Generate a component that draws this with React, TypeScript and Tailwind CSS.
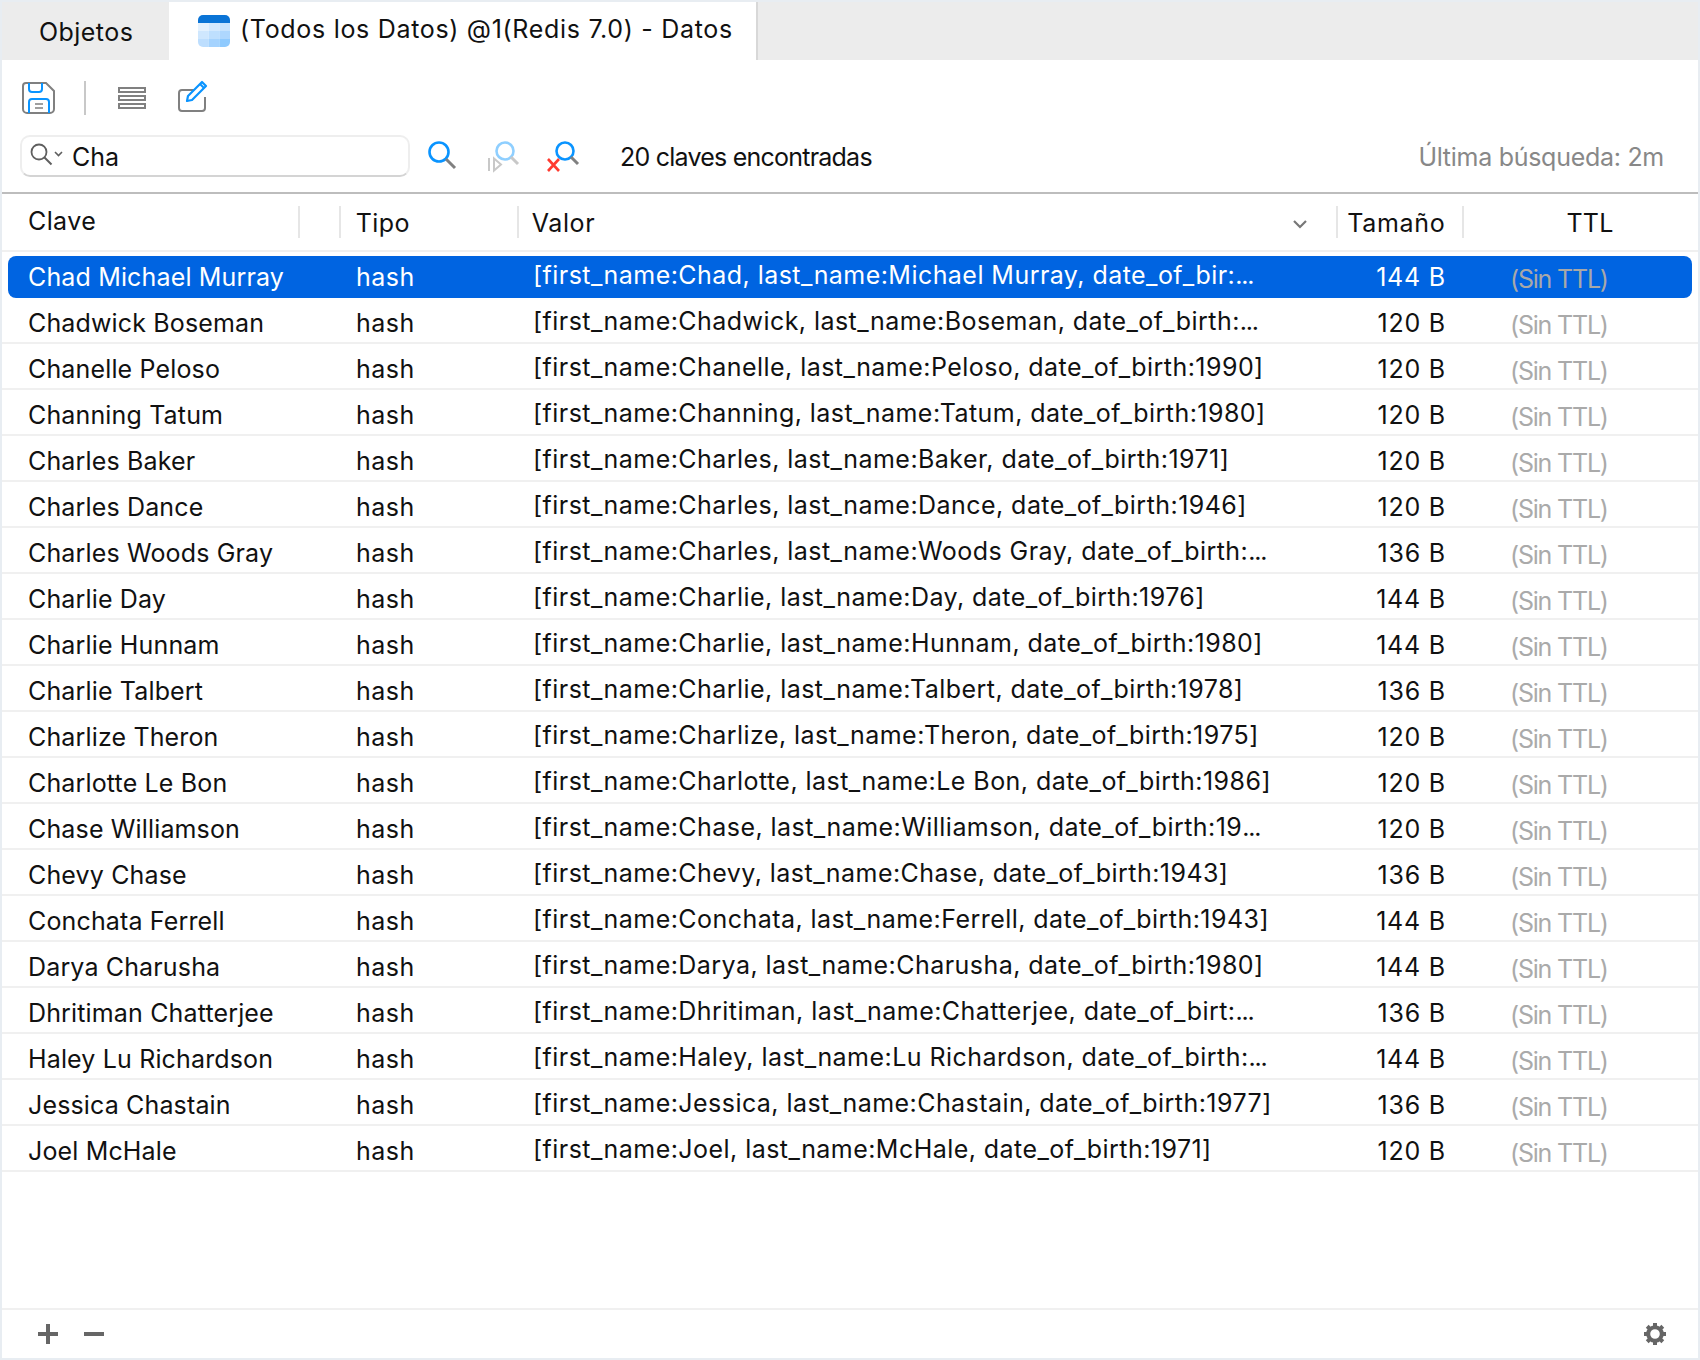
import React from "react";

const rows: [string, string, string][] = [
  ["Chad Michael Murray", "[first_name:Chad, last_name:Michael Murray, date_of_bir:...", "144 B"],
  ["Chadwick Boseman", "[first_name:Chadwick, last_name:Boseman, date_of_birth:...", "120 B"],
  ["Chanelle Peloso", "[first_name:Chanelle, last_name:Peloso, date_of_birth:1990]", "120 B"],
  ["Channing Tatum", "[first_name:Channing, last_name:Tatum, date_of_birth:1980]", "120 B"],
  ["Charles Baker", "[first_name:Charles, last_name:Baker, date_of_birth:1971]", "120 B"],
  ["Charles Dance", "[first_name:Charles, last_name:Dance, date_of_birth:1946]", "120 B"],
  ["Charles Woods Gray", "[first_name:Charles, last_name:Woods Gray, date_of_birth:...", "136 B"],
  ["Charlie Day", "[first_name:Charlie, last_name:Day, date_of_birth:1976]", "144 B"],
  ["Charlie Hunnam", "[first_name:Charlie, last_name:Hunnam, date_of_birth:1980]", "144 B"],
  ["Charlie Talbert", "[first_name:Charlie, last_name:Talbert, date_of_birth:1978]", "136 B"],
  ["Charlize Theron", "[first_name:Charlize, last_name:Theron, date_of_birth:1975]", "120 B"],
  ["Charlotte Le Bon", "[first_name:Charlotte, last_name:Le Bon, date_of_birth:1986]", "120 B"],
  ["Chase Williamson", "[first_name:Chase, last_name:Williamson, date_of_birth:19...", "120 B"],
  ["Chevy Chase", "[first_name:Chevy, last_name:Chase, date_of_birth:1943]", "136 B"],
  ["Conchata Ferrell", "[first_name:Conchata, last_name:Ferrell, date_of_birth:1943]", "144 B"],
  ["Darya Charusha", "[first_name:Darya, last_name:Charusha, date_of_birth:1980]", "144 B"],
  ["Dhritiman Chatterjee", "[first_name:Dhritiman, last_name:Chatterjee, date_of_birt:...", "136 B"],
  ["Haley Lu Richardson", "[first_name:Haley, last_name:Lu Richardson, date_of_birth:...", "144 B"],
  ["Jessica Chastain", "[first_name:Jessica, last_name:Chastain, date_of_birth:1977]", "136 B"],
  ["Joel McHale", "[first_name:Joel, last_name:McHale, date_of_birth:1971]", "120 B"],
];

const BLUE = "#0a94ff";
const GRAY = "#808080";

function TableIcon() {
  const cells = ["#e3f1fe", "#d3e9fe", "#c6e3fe", "#cfe7fe", "#bedffe", "#aed7fe", "#bddefe", "#a5d3fe", "#8fcafe"];
  return (
    <svg width="32" height="32" viewBox="0 0 32 32" className="shrink-0">
      <defs>
        <clipPath id="tb">
          <rect width="32" height="32" rx="5" />
        </clipPath>
      </defs>
      <g clipPath="url(#tb)">
        <rect width="32" height="8" fill="#0a74d6" />
        {cells.map((c, i) => (
          <rect key={i} x={(i % 3) * 10.67} y={8 + Math.floor(i / 3) * 8} width="10.7" height="8" fill={c} />
        ))}
      </g>
    </svg>
  );
}

function SaveIcon() {
  return (
    <svg width="34" height="34" viewBox="0 0 34 34" className="shrink-0">
      <path d="M4 2h20l8 8v18a4 4 0 0 1-4 4H5a4 4 0 0 1-4-4V5a3 3 0 0 1 3-3z" fill="none" stroke={GRAY} strokeWidth="2" />
      <path d="M7 2v6a3 3 0 0 0 3 3h7a3 3 0 0 0 3-3V2" fill="none" stroke={BLUE} strokeWidth="2" />
      <path d="M7 32V21a3 3 0 0 1 3-3h14a3 3 0 0 1 3 3v11" fill="none" stroke={BLUE} strokeWidth="2" />
      <path d="M13 23h8M13 27h8" stroke={GRAY} strokeWidth="1.6" />
    </svg>
  );
}

function ListIcon() {
  return (
    <svg width="30" height="24" viewBox="0 0 30 24" className="shrink-0">
      <g fill="none" stroke={GRAY} strokeWidth="2">
        <rect x="2" y="2" width="26" height="4" />
        <rect x="2" y="10" width="26" height="4" />
        <rect x="2" y="18" width="26" height="4" />
      </g>
    </svg>
  );
}

function EditIcon() {
  return (
    <svg width="34" height="34" viewBox="0 0 34 34" className="shrink-0">
      <path d="M17 11H5a3 3 0 0 0-3 3v15a3 3 0 0 0 3 3h20a3 3 0 0 0 3-3V18" fill="none" stroke={GRAY} strokeWidth="2" />
      <path d="M10 22l1-5L25 3l4 4-14 14z" fill="none" stroke={BLUE} strokeWidth="2.2" strokeLinejoin="round" />
      <path d="M23 5l4 4" stroke={BLUE} strokeWidth="2" />
    </svg>
  );
}

function SearchIcon() {
  return (
    <svg width="30" height="30" viewBox="0 0 30 30" className="shrink-0">
      <circle cx="11" cy="11" r="9.5" fill="none" stroke={BLUE} strokeWidth="2.6" />
      <path d="M18 18l9 9" stroke={GRAY} strokeWidth="3" />
    </svg>
  );
}

function SearchNextIcon() {
  return (
    <svg width="34" height="32" viewBox="0 0 34 32" className="shrink-0">
      <circle cx="19" cy="10" r="8.5" fill="none" stroke="#8fcfff" strokeWidth="2.6" />
      <path d="M25 16l7 7" stroke="#c8c8c8" strokeWidth="3" />
      <path d="M3 17v13" stroke="#c8c8c8" strokeWidth="2" />
      <path d="M8 17.5l7 6-7 6z" fill="none" stroke="#c8c8c8" strokeWidth="2" />
    </svg>
  );
}

function SearchClearIcon() {
  return (
    <svg width="34" height="32" viewBox="0 0 34 32" className="shrink-0">
      <circle cx="19" cy="10" r="8.5" fill="none" stroke={BLUE} strokeWidth="2.6" />
      <path d="M25 16l7 7" stroke={GRAY} strokeWidth="3" />
      <path d="M2 18l11 12M13 18L2 30" stroke="#ff3b30" strokeWidth="2.6" />
    </svg>
  );
}

function InputSearchIcon() {
  return (
    <svg width="36" height="26" viewBox="0 0 36 26" className="shrink-0">
      <circle cx="9" cy="9" r="7.5" fill="none" stroke="#5f5f5f" strokeWidth="1.8" />
      <path d="M14.5 14.5l7 7" stroke="#5f5f5f" strokeWidth="2" />
      <path d="M25 9l3.5 3.5L32 9" fill="none" stroke="#5f5f5f" strokeWidth="1.6" />
    </svg>
  );
}

function GearIcon() {
  const teeth = [0, 45, 90, 135, 180, 225, 270, 315];
  return (
    <svg width="22" height="22" viewBox="0 0 22 22">
      <circle cx="11" cy="11" r="6.8" fill="none" stroke="#666" strokeWidth="4" />
      {teeth.map((a) => (
        <rect key={a} x="9" y="0" width="4" height="4" fill="#666" transform={`rotate(${a} 11 11)`} />
      ))}
    </svg>
  );
}

export default function App() {
  return (
    <div
      className="w-[1700px] h-[1360px] bg-white border-2 border-[#e8edf2] flex flex-col text-[25px] text-[#111] overflow-hidden"
      style={{ fontFamily: "Inter, 'Noto Sans', sans-serif" }}
    >
      {/* Tabs */}
      <div className="h-[58px] bg-[#ececec] flex shrink-0">
        <div className="w-[167px] flex items-center pl-[37px] pt-[3px] tracking-[0.45px]">Objetos</div>
        <div className="w-[589px] bg-white border-r-2 border-[#d8d8d8] flex items-center pl-[29px] gap-[10px]">
          <TableIcon />
          <span className="whitespace-nowrap tracking-[0.69px] pb-[2px]">(Todos los Datos) @1(Redis 7.0) - Datos</span>
        </div>
      </div>

      {/* Toolbar */}
      <div className="h-[75px] flex items-center pl-[20px] shrink-0">
        <SaveIcon />
        <div className="w-[2px] h-[34px] bg-[#c8c8c8] ml-[28px] mr-[31px]" />
        <ListIcon />
        <div className="ml-[30px] pb-[3px]">
          <EditIcon />
        </div>
      </div>

      {/* Search */}
      <div className="h-[57px] flex items-start pl-[18px] pr-[34px] shrink-0">
        <div className="w-[390px] h-[42px] rounded-[10px] border-2 border-[#eeeeee] border-b-[#d4d4d4] flex items-center pl-[8px] gap-[6px]">
          <InputSearchIcon />
          <span className="pt-[3px]">Cha</span>
        </div>
        <div className="ml-[18px] mt-[6px]">
          <SearchIcon />
        </div>
        <div className="ml-[28px] mt-[6px]">
          <SearchNextIcon />
        </div>
        <div className="ml-[26px] mt-[6px]">
          <SearchClearIcon />
        </div>
        <div className="ml-[40px] h-[42px] flex items-center pt-[3px] tracking-[-0.77px]">20 claves encontradas</div>
        <div className="ml-auto h-[42px] flex items-center pt-[3px] text-[#888888] tracking-[-0.28px]">Última búsqueda: 2m</div>
      </div>

      {/* Header */}
      <div className="h-[60px] border-t-2 border-b-2 border-t-[#bdbdbd] border-b-[#f0f0f0] flex items-center shrink-0 pl-[26px]">
        <div className="w-[272px] h-[32px] flex items-center border-r-2 border-[#e6e6e6] tracking-[0.4px]">Clave</div>
        <div className="w-[41px] h-[32px] border-r-2 border-[#e6e6e6]" />
        <div className="w-[178px] h-[32px] flex items-center pl-[15px] pt-[4px] border-r-2 border-[#e6e6e6] tracking-[0.4px]">Tipo</div>
        <div className="w-[820px] h-[32px] flex items-center justify-between pl-[13px] pr-[28px] pt-[4px] border-r-2 border-[#e6e6e6] tracking-[0.6px]">
          <span>Valor</span>
          <svg width="16" height="10" viewBox="0 0 16 10">
            <path d="M2 2l6 6 6-6" fill="none" stroke="#777" strokeWidth="2.2" />
          </svg>
        </div>
        <div className="w-[126px] h-[32px] flex items-center pl-[9px] pt-[4px] border-r-2 border-[#e6e6e6] tracking-[0.7px]">Tamaño</div>
        <div className="w-[234px] h-[32px] flex items-center justify-center pl-[18px] pt-[4px] tracking-[0.3px]">TTL</div>
      </div>

      {/* Rows */}
      <div className="flex-1 flex flex-col">
        {rows.map((r, i) => {
          const sel = i === 0;
          const cut = r[1].endsWith("...");
          const body = cut ? r[1].slice(0, -3) : r[1];
          return (
            <div
              key={r[0]}
              className={
                sel
                  ? "mt-[4px] ml-[6px] mr-[6px] h-[42px] shrink-0 pl-[20px] pt-[2px] flex items-center rounded-lg bg-[#0064e1] text-white"
                  : "h-[46px] shrink-0 pl-[26px] pt-[8px] flex items-center border-b-2 border-[#f0f0f0]"
              }
            >
              <div className="w-[328px] whitespace-nowrap tracking-[0.15px]">{r[0]}</div>
              <div className="w-[177px] tracking-[0.5px]">hash</div>
              <div className="w-[800px] whitespace-nowrap pb-[4px] tracking-[0.45px]">
                {body}
                {cut && <span className="tracking-[-1.2px]">...</span>}
              </div>
              <div className="w-[113px] text-right tracking-[0.8px]">{r[2]}</div>
              <div className={`pl-[64px] pt-[4px] tracking-[-1.2px] whitespace-nowrap ${sel ? "text-[#a8a8a8]" : "text-[#aaaaaa]"}`}>(Sin TTL)</div>
            </div>
          );
        })}
      </div>

      {/* Footer */}
      <div className="h-[50px] border-t-2 border-[#f0f0f0] flex items-center pl-[36px] pr-[32px] shrink-0">
        <svg width="20" height="20" viewBox="0 0 20 20">
          <path d="M8 0h4v8h8v4h-8v8H8v-8H0V8h8z" fill="#666" />
        </svg>
        <svg width="20" height="4" viewBox="0 0 20 4" className="ml-[26px]">
          <rect width="20" height="4" fill="#666" />
        </svg>
        <div className="ml-auto flex">
          <GearIcon />
        </div>
      </div>
    </div>
  );
}
